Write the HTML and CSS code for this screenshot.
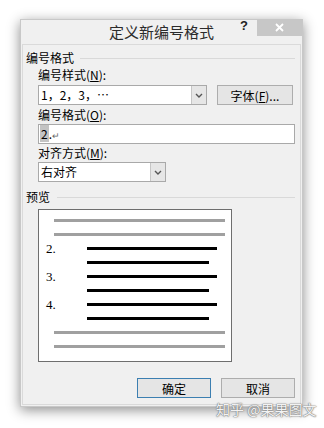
FILE: index.html
```html
<!DOCTYPE html>
<html lang="zh-CN">
<head>
    <meta charset="UTF-8">
    <title>定义新编号格式</title>
    <link rel="stylesheet" href="styles.css">
</head>
<body>
    <div class="dialog">
        <div class="titlebar">
            <span class="title">定义新编号格式</span>
            <span class="help">?</span>
            <span class="close">
                <svg width="9" height="9" viewBox="0 0 9 9"><path d="M1 1 L8 8 M8 1 L1 8" stroke="#fff" stroke-width="1.8" fill="none"/></svg>
            </span>
        </div>
        <div class="client">
            <div class="group-head"><span>编号格式</span><i class="rule"></i></div>
            <div class="fields">
                <div class="label">编号样式(<u>N</u>):</div>
                <div class="row">
                    <div class="combo wide">
                        <span class="val">1，2，3，…</span>
                        <span class="arrow">
                            <svg width="8" height="5" viewBox="0 0 8 5"><path d="M1 1 L4 4 L7 1" stroke="#555" stroke-width="1.4" fill="none"/></svg>
                        </span>
                    </div>
                    <button class="btn font-btn">字体(<u>F</u>)...</button>
                </div>
                <div class="label">编号格式(<u>O</u>):</div>
                <div class="textbox"><span class="sel">2</span>.<span class="ret">↵</span></div>
                <div class="label">对齐方式(<u>M</u>):</div>
                <div class="combo narrow">
                    <span class="val">右对齐</span>
                    <span class="arrow">
                        <svg width="8" height="5" viewBox="0 0 8 5"><path d="M1 1 L4 4 L7 1" stroke="#555" stroke-width="1.4" fill="none"/></svg>
                    </span>
                </div>
            </div>
            <div class="group-head preview-head"><span>预览</span><i class="rule"></i></div>
            <div class="fields">
                <div class="preview">
                    <div class="gl"></div>
                    <div class="gl"></div>
                    <div class="item">
                        <span class="num">2.</span>
                        <div class="lines"><div class="bl"></div><div class="bl short"></div></div>
                    </div>
                    <div class="item">
                        <span class="num">3.</span>
                        <div class="lines"><div class="bl"></div><div class="bl short"></div></div>
                    </div>
                    <div class="item">
                        <span class="num">4.</span>
                        <div class="lines"><div class="bl"></div><div class="bl short"></div></div>
                    </div>
                    <div class="gl"></div>
                    <div class="gl"></div>
                </div>
            </div>
            <div class="actions">
                <button class="btn default">确定</button>
                <button class="btn">取消</button>
            </div>
        </div>
    </div>
    <div class="watermark">知乎 @果果图文</div>
</body>
</html>
```
FILE: styles.css
```css
* {
    box-sizing: border-box;
}
body {
    margin: 0;
    width: 324px;
    height: 428px;
    overflow: hidden;
    position: relative;
    background: #ffffff;
    font-family: "Noto Sans CJK SC", "Noto Sans", sans-serif;
    font-size: 12px;
    color: #000;
}
.dialog {
    margin: 19px 0 0 20px;
    width: 283px;
    height: 388px;
    background: #f0f0f0;
    border: 1px solid #c8c8c8;
    box-shadow: 0 3px 12px rgba(0, 0, 0, 0.45);
    display: flex;
    flex-direction: column;
}
.titlebar {
    height: 24px;
    display: grid;
    grid-template-columns: 1fr 22px 45px;
}
.title {
    grid-area: 1 / 1 / 2 / 4;
    text-align: center;
    font-size: 15px;
    line-height: 24px;
    color: #2b2b2b;
}
.help {
    grid-area: 1 / 2;
    padding-left: 5px;
    font-family: "Liberation Sans", sans-serif;
    font-weight: bold;
    font-size: 13px;
    line-height: 12px;
    color: #222;
}
.close {
    grid-area: 1 / 3;
    margin-top: -1px;
    height: 17px;
    background: #c7c7c7;
    display: flex;
    align-items: center;
    justify-content: center;
}
.client {
    flex: 1;
    margin: 0 1px 1px 1px;
    border: 1px solid #dadada;
    padding: 5px 5px 0 3px;
    display: flex;
    flex-direction: column;
}
.group-head {
    display: flex;
    align-items: center;
    gap: 6px;
    line-height: 16px;
}
.group-head .rule {
    flex: 1;
    height: 1px;
    background: #d9d9d9;
}
.preview-head {
    margin-top: 7px;
    gap: 7px;
}
.fields {
    padding-left: 12px;
}
.label {
    line-height: 16px;
    margin-top: 1px;
}
.label + .textbox,
.label + .combo {
    margin-top: 1px;
}
.textbox + .label {
    margin-top: 1px;
}
.row + .label {
    margin-top: 2px;
}
.row {
    display: flex;
    gap: 10px;
    margin-top: 2px;
}
.combo {
    height: 20px;
    border: 1px solid #a9a9a9;
    background: #fff;
    display: flex;
}
.combo.wide {
    width: 169px;
}
.combo.narrow {
    width: 128px;
}
.combo .val {
    flex: 1;
    padding-left: 2px;
    line-height: 18px;
}
.combo .arrow {
    width: 15px;
    border-left: 1px solid #c6c6c6;
    background: #e6e6e6;
    display: flex;
    align-items: center;
    justify-content: center;
}
.textbox {
    height: 20px;
    border: 1px solid #a9a9a9;
    background: #fff;
    padding-left: 1px;
    line-height: 18px;
}
.textbox .sel {
    background: #c3c3c3;
    padding: 0 1px;
}
.textbox .ret {
    font-size: 9px;
    color: #666;
}
.btn {
    height: 20px;
    padding: 0;
    border: 1px solid #adadad;
    background: #e5e5e5;
    font-family: inherit;
    font-size: 12px;
    color: #000;
}
.font-btn {
    width: 76px;
}
.preview {
    margin-top: 4px;
    width: 194px;
    height: 153px;
    border: 1px solid #6e6e6e;
    background: #fff;
    padding: 9px 0 0 7px;
    display: flex;
    flex-direction: column;
    gap: 11px;
}
.gl {
    margin-left: 8px;
    width: 171px;
    height: 3px;
    background: #a0a0a0;
}
.item {
    display: flex;
}
.num {
    width: 41px;
    height: 3px;
    line-height: 3px;
    font-family: "Liberation Serif", serif;
    font-size: 13px;
}
.lines {
    display: flex;
    flex-direction: column;
    gap: 11px;
}
.bl {
    width: 130px;
    height: 3px;
    background: #000;
}
.bl.short {
    width: 122px;
}
.actions {
    margin-top: 16px;
    display: flex;
    justify-content: flex-end;
    gap: 10px;
}
.actions .btn {
    width: 74px;
}
.btn.default {
    border-color: #3c7fb1;
}
.watermark {
    position: absolute;
    left: 216px;
    top: 400px;
    font-size: 14px;
    line-height: 18px;
    color: #f2f2f2;
    text-shadow: 0 0 1px #777, 0 0 1px #777, 0 0 2px #999;
}
```
